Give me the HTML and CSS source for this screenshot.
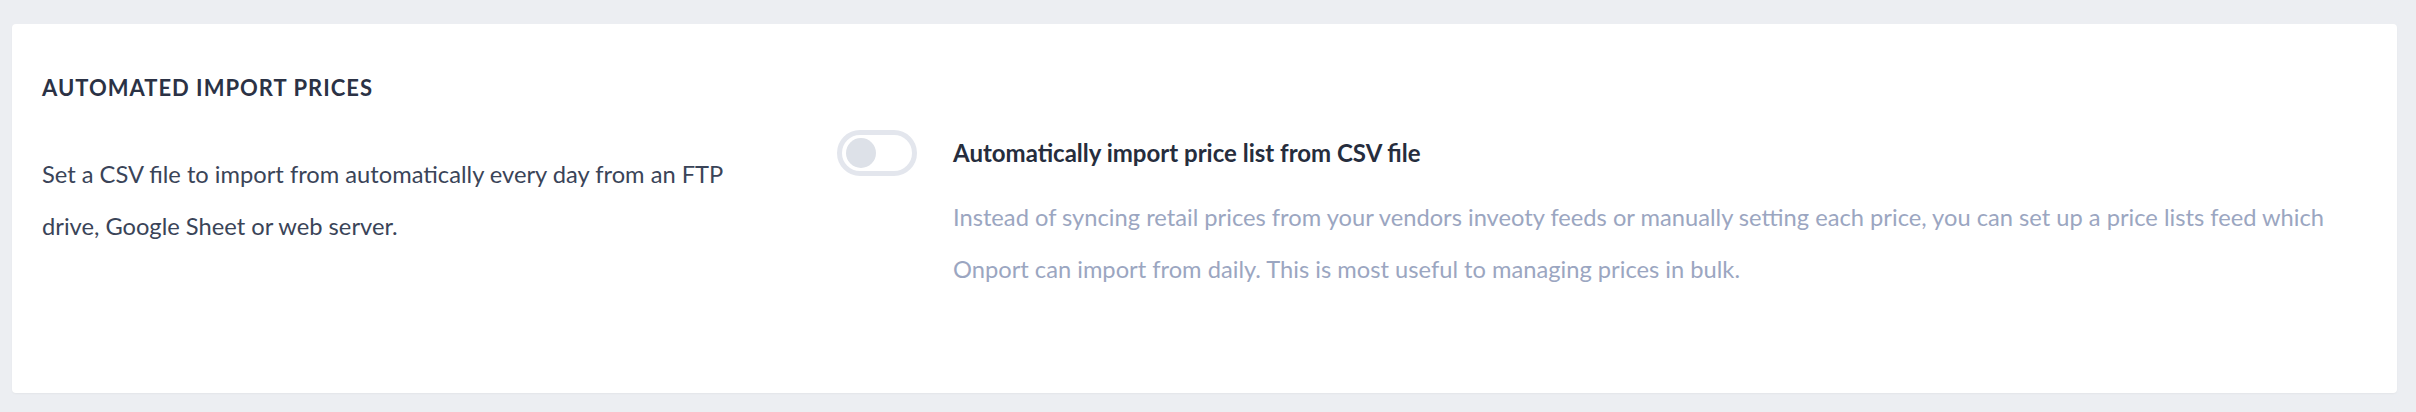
FILE: index.html
```html
<!DOCTYPE html>
<html lang="en">
<head>
  <meta charset="UTF-8">
  <meta name="viewport" content="width=device-width, initial-scale=1.0">
  <title>Automated import prices</title>
  <link rel="stylesheet" href="styles.css">
</head>
<body>
  <div class="card">
    <h2 class="card-title">AUTOMATED IMPORT PRICES</h2>

    <div class="row">
      <p class="intro">Set a CSV file to import from automatically every day from an FTP drive, Google Sheet or web server.</p>

      <div class="setting">
        <label class="switch">
          <input type="checkbox">
          <span class="knob"></span>
        </label>
        <div class="setting-text">
          <h3>Automatically import price list from CSV file</h3>
          <p>Instead of syncing retail prices from your vendors inveoty feeds or manually setting each price, you can set up a price lists feed which Onport can import from daily. This is most useful to managing prices in bulk.</p>
        </div>
      </div>
    </div>
  </div>
</body>
</html>
```

FILE: styles.css
```css
* {
  box-sizing: border-box;
  margin: 0;
  padding: 0;
}

html, body {
  background: #eceef2;
  font-family: 'Lato', 'Liberation Sans', sans-serif;
  color: #333c4e;
}

body {
  padding: 24px 19px 19px 12px;
}

.card {
  background: #fff;
  border-radius: 4px;
  box-shadow: 0 1px 2px rgba(0,0,0,0.04);
  padding: 51px 30px 98px;
}

.card-title {
  font-size: 22px;
  line-height: 26px;
  font-weight: 700;
  letter-spacing: 1px;
  color: #2b3245;
  margin-bottom: 29px;
}

.row {
  display: grid;
  grid-template-columns: 1fr 2fr;
  gap: 30px;
  align-items: start;
}

.intro {
  font-size: 23.7px;
  line-height: 52px;
  color: #3a4458;
  margin-top: 18px;
  max-width: 720px;
}

.setting {
  display: flex;
  gap: 36px;
}

.switch {
  flex: none;
  position: relative;
  width: 80px;
  height: 46px;
  border: 5px solid #e3e6ed;
  border-radius: 23px;
  cursor: pointer;
}

.switch input {
  display: none;
}

.knob {
  position: absolute;
  top: 3px;
  left: 4px;
  width: 30px;
  height: 30px;
  border-radius: 50%;
  background: #dde1e8;
}

.setting-text h3 {
  font-size: 24px;
  line-height: 28px;
  font-weight: 700;
  color: #262d3d;
  margin-top: 9px;
  margin-bottom: 24px;
}

.setting-text p {
  font-size: 23.7px;
  line-height: 52px;
  color: #9ba6c1;
}
```
